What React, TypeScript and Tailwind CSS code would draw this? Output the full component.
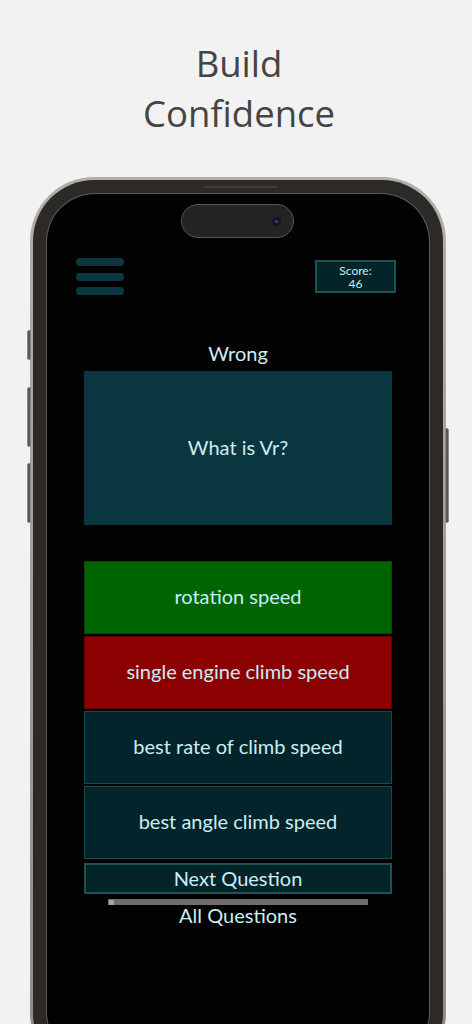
const appFont = { fontFamily: "Lato, 'Noto Sans', sans-serif" };

function Hamburger() {
  return (
    <div className="flex flex-col gap-[6.5px]">
      <div className="h-[8px] w-[48px] rounded-full bg-[#0b3741]" />
      <div className="h-[8px] w-[48px] rounded-full bg-[#0b3741]" />
      <div className="h-[8px] w-[48px] rounded-full bg-[#0b3741]" />
    </div>
  );
}

function ScoreBox({ score }: { score: number }) {
  return (
    <div className="mt-[2px] flex h-[33px] w-[81px] flex-col items-center justify-center border-2 border-[#1b5454] bg-[#03252a] text-[12px] leading-[13px] text-[#c9eef3]">
      <span>Score:</span>
      <span>{score}</span>
    </div>
  );
}

type Answer = { text: string; state: "right" | "wrong" | "idle" };

const answers: Answer[] = [
  { text: "rotation speed", state: "right" },
  { text: "single engine climb speed", state: "wrong" },
  { text: "best rate of climb speed", state: "idle" },
  { text: "best angle climb speed", state: "idle" },
];

function AnswerButton({ a }: { a: Answer }) {
  const tone =
    a.state === "right"
      ? "bg-[#006400] border-[#004d00]"
      : a.state === "wrong"
        ? "bg-[#8b0000] border-[#5e0000]"
        : "bg-[#03242a] border-[#1a4a4e]";
  return (
    <div
      className={`flex h-[73px] items-center justify-center border pb-[3px] ${tone} text-[20px] text-[#c9eef3]`}
    >
      {a.text}
    </div>
  );
}

function Screen() {
  return (
    <div
      className="relative h-full overflow-hidden rounded-[48px] bg-[#020203] ring-1 ring-[#5c5c5c]"
      style={appFont}
    >
      {/* dynamic island */}
      <div className="absolute left-[134px] top-[10px] h-[34px] w-[113px] rounded-full border border-[#555] bg-[#242424]">
        <div className="absolute right-[12px] top-[12px] h-[9px] w-[9px] rounded-full bg-[#15152b]">
          <div className="m-[3px] h-[3px] w-[3px] rounded-full bg-[#3a3f80]" />
        </div>
      </div>

      <div className="flex items-start justify-between pl-[29px] pr-[33px] pt-[64px]">
        <Hamburger />
        <ScoreBox score={46} />
      </div>

      <div className="px-[37px] pt-[46px]">
        <p className="text-center text-[20px] leading-[24px] text-[#c9eef3]">Wrong</p>
        <div className="mt-[6px] flex h-[154px] items-center justify-center bg-[#0a3640] pb-[3px] text-[20px] text-[#c9eef3]">
          What is Vr?
        </div>

        <div className="mt-[36px] flex flex-col gap-[2px]">
          {answers.map((a) => (
            <AnswerButton key={a.text} a={a} />
          ))}
        </div>

        <div className="mt-[4px] flex h-[31px] items-center justify-center border-2 border-[#1b5454] bg-[#03252a] pb-[2px] text-[20px] text-[#c9eef3]">
          Next Question
        </div>

        <div className="mx-[24px] mt-[5px] flex h-[6px] items-center bg-[#6f6f6f] px-[1px]">
          <div className="h-[5px] w-[5px] bg-[#a5a5a5]" />
        </div>
        <p className="text-center text-[20px] leading-[20px] text-[#c9eef3]">All Questions</p>
      </div>
    </div>
  );
}

function Phone() {
  return (
    <div className="relative ml-[30px] mt-[39px] self-start">
      {/* side buttons */}
      <div className="absolute left-[-3px] top-[153px] h-[30px] w-[4px] rounded-l-[2px] border border-[#8e8a84] bg-[#5a5753]" />
      <div className="absolute left-[-3px] top-[210px] h-[60px] w-[4px] rounded-l-[2px] border border-[#8e8a84] bg-[#5a5753]" />
      <div className="absolute left-[-3px] top-[286px] h-[60px] w-[4px] rounded-l-[2px] border border-[#8e8a84] bg-[#5a5753]" />
      <div className="absolute right-[-3px] top-[251px] h-[95px] w-[4px] rounded-r-[2px] border border-[#8e8a84] bg-[#5a5753]" />

      <div className="h-[900px] w-[416px] rounded-[64px] bg-gradient-to-b from-[#b3aea6] to-[#8f8a83] p-[3px]">
        <div className="relative h-full rounded-[61px] bg-[#2b2a29] p-[14px]">
          <div className="absolute left-[170px] top-[6px] h-[2px] w-[75px] rounded-full bg-[#3d3d3d]" />
          <Screen />
        </div>
      </div>
    </div>
  );
}

export default function App() {
  return (
    <div className="flex h-[1024px] w-full flex-col items-center overflow-hidden bg-[#f2f2f2]">
      <h1
        className="ml-[6px] pt-[38px] text-center text-[36.5px] font-normal leading-[50px] text-[#444444]"
        style={{ fontFamily: "'Open Sans', 'Noto Sans', sans-serif" }}
      >
        Build
        <br />
        Confidence
      </h1>
      <Phone />
    </div>
  );
}
